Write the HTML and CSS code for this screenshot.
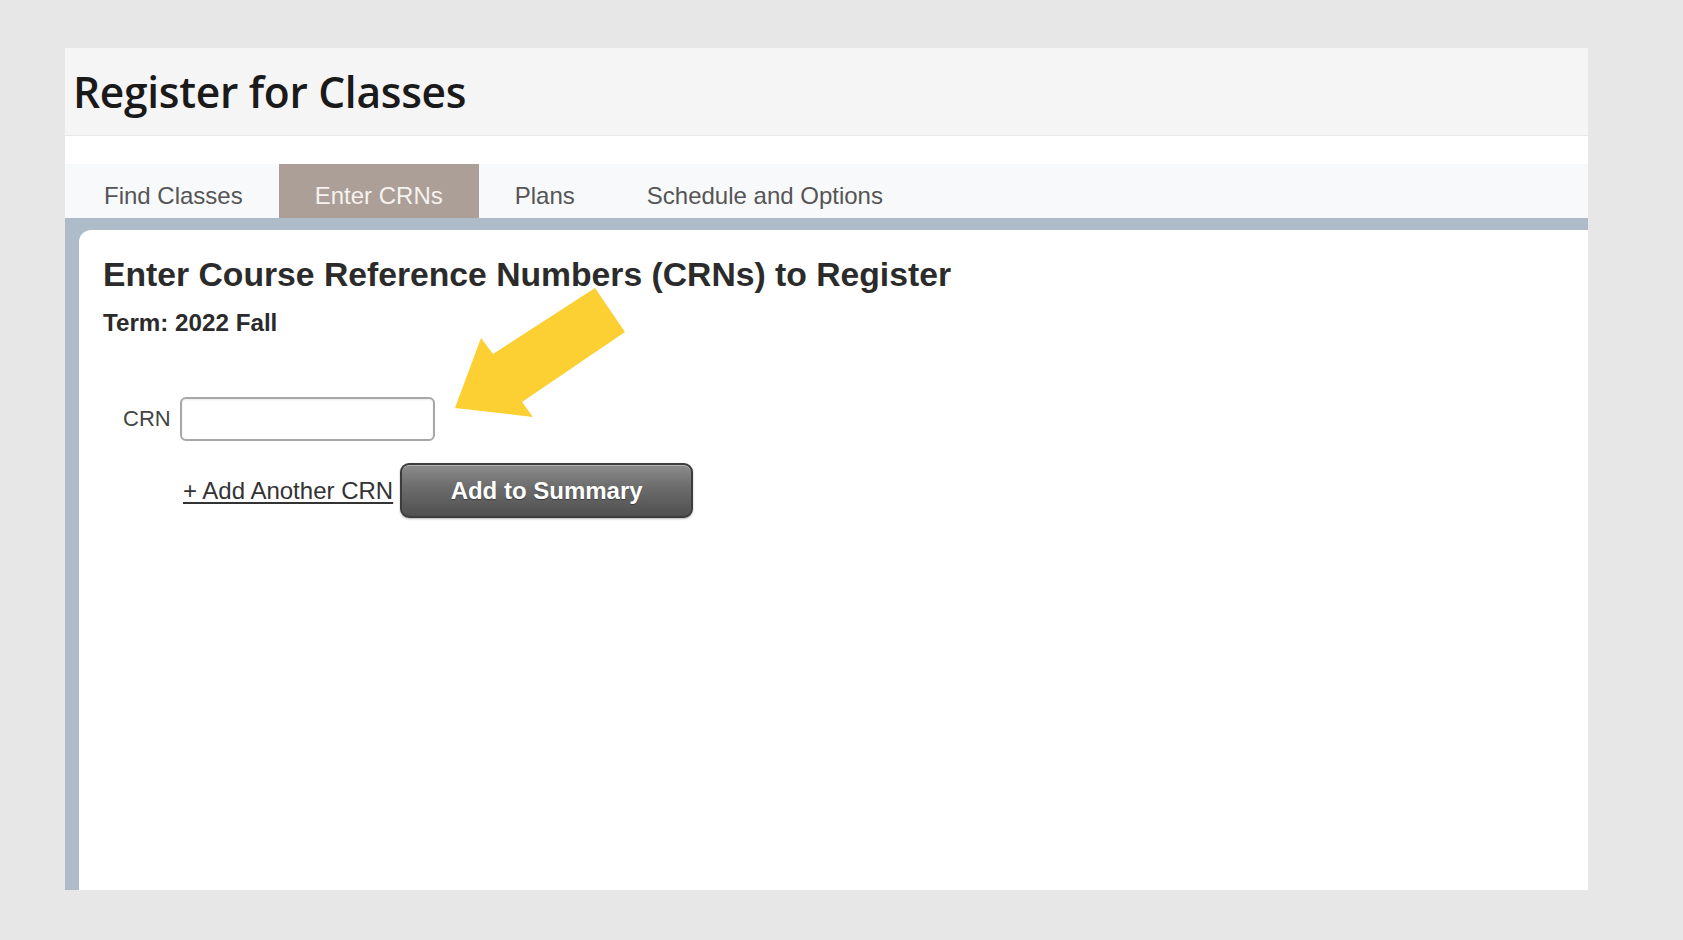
FILE: index.html
```html
<!DOCTYPE html>
<html lang="en">
  <head>
    <meta charset="UTF-8" />
    <meta name="viewport" content="width=device-width, initial-scale=1.0" />
    <title>Register for Classes</title>
    <link rel="stylesheet" href="styles.css">
  </head>
  <body>
    <div class="page-card">
      <div class="page-header">
        <h1>Register for Classes</h1>
      </div>
      <div class="header-gap"></div>
      <ul class="tabs">
        <li>Find Classes</li>
        <li class="active">Enter CRNs</li>
        <li>Plans</li>
        <li>Schedule and Options</li>
      </ul>
      <div class="tab-frame">
        <div class="tab-panel">
          <h2>Enter Course Reference Numbers (CRNs) to Register</h2>
          <p class="term">Term: 2022 Fall</p>
          <div class="crn-row">
            <label for="crn1">CRN</label>
            <input type="text" id="crn1" name="crn1" />
          </div>
          <div class="action-row">
            <a href="#" class="add-link">+ Add Another CRN</a>
            <button type="button" class="btn-summary">Add to Summary</button>
          </div>
          <!-- annotation arrow pointing at the CRN box -->
          <svg class="pointer-arrow" width="180" height="140" viewBox="366 50 190 145">
            <polygon points="376,178 402,108 414,124 516,58 546,102 443,172 454,187" fill="#fccf33" />
          </svg>
        </div>
      </div>
    </div>
  </body>
</html>
```

FILE: styles.css
```css
:root {
  --page-bg: #e7e7e7;
  --header-bg: #f5f5f5;
  --tabs-bg: #f8f9fa;
  --frame-color: #aebbc8;
  --active-tab: #ab9f97;
  --text-color: #333;
}
body {
  margin: 0;
  padding: 48px 0 0 65px;
  background-color: var(--page-bg);
  font-family: "Liberation Sans", Arial, sans-serif;
  color: var(--text-color);
}
.page-card {
  width: 1523px;
  height: 842px;
  display: flex;
  flex-direction: column;
  background-color: #fff;
}
.page-header {
  height: 87px;
  display: flex;
  align-items: center;
  padding-left: 8px;
  background-color: var(--header-bg);
  border-bottom: 1px solid #e8e8e8;
}
.page-header h1 {
  margin: 0;
  font-family: "Open Sans", sans-serif;
  font-weight: 600;
  font-size: 42.5px;
  color: #1a1a1a;
  letter-spacing: -0.3px;
}
.header-gap {
  height: 28px;
}
.tabs {
  list-style: none;
  margin: 0;
  padding: 0 0 0 3px;
  height: 54px;
  display: flex;
  background-color: var(--tabs-bg);
}
.tabs li {
  padding: 10px 36px 0;
  display: flex;
  align-items: center;
  font-size: 24px;
  color: #555;
}
.tabs li.active {
  background-color: var(--active-tab);
  color: #f6f2ef;
}
.tab-frame {
  flex: 1;
  display: flex;
  padding: 12px 0 0 14px;
  background-color: var(--frame-color);
}
.tab-panel {
  flex: 1;
  position: relative;
  padding: 25px 24px;
  background-color: #fff;
  border-top-left-radius: 12px;
}
.tab-panel h2 {
  margin: 0;
  font-size: 33.7px;
  line-height: 38px;
  font-weight: bold;
  color: #2b2b2b;
}
.term {
  margin: 16px 0 0;
  font-size: 24.2px;
  line-height: 28px;
  font-weight: bold;
  color: #2b2b2b;
}
.crn-row {
  display: flex;
  align-items: center;
  margin-top: 60px;
  padding-left: 20px;
}
.crn-row label {
  font-size: 22px;
  color: #444;
  margin-right: 9px;
}
.crn-row input {
  width: 255px;
  height: 44px;
  box-sizing: border-box;
  border: 2px solid #a7a7a7;
  border-radius: 6px;
  box-shadow: inset 0 1px 2px rgba(0, 0, 0, 0.08);
  font-size: 20px;
}
.action-row {
  display: flex;
  align-items: center;
  margin-top: 22px;
  padding-left: 80px;
}
.add-link {
  font-size: 24px;
  color: #333;
  text-decoration: underline;
  text-underline-offset: 3px;
  margin-right: 7px;
}
.btn-summary {
  width: 293px;
  height: 55px;
  border: 2px solid #3d3d3d;
  border-radius: 9px;
  background: linear-gradient(#8c8c8c, #6b6b6b 45%, #505050);
  box-shadow: inset 0 1px 0 rgba(255, 255, 255, 0.35), 0 1px 2px rgba(0, 0, 0, 0.3);
  color: #fff;
  font-family: "Liberation Sans", Arial, sans-serif;
  font-size: 24px;
  font-weight: bold;
  text-shadow: 0 1px 1px rgba(0, 0, 0, 0.4);
  cursor: pointer;
}
.pointer-arrow {
  position: absolute;
  left: 366px;
  top: 50px;
  width: 190px;
  height: 145px;
}
```
